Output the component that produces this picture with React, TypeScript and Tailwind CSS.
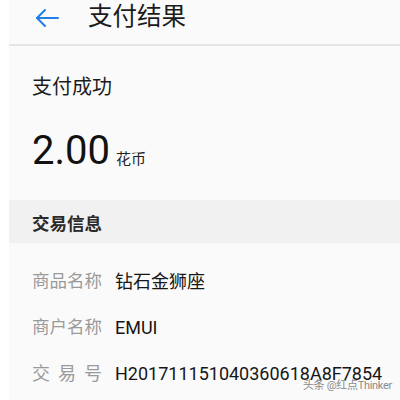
const font = { fontFamily: 'Roboto, "Noto Sans CJK SC", sans-serif' };

function BackArrow() {
  return (
    <svg width="26" height="24" viewBox="0 0 26 24" fill="none" stroke="#1f7fe6" strokeWidth="2" strokeLinecap="round" strokeLinejoin="round">
      <path d="M24 12H3" />
      <path d="M11 4L3 12L11 20" />
    </svg>
  );
}

const rows = [
  { label: '商品名称', value: '钻石金狮座', spread: false },
  { label: '商户名称', value: 'EMUI', spread: false },
  { label: '交易号', value: 'H201711151040360618A8F7854', spread: true },
];

export default function App() {
  return (
    <div className="relative h-[400px] w-[400px] overflow-hidden bg-white pl-[9px]" style={font}>
      <div className="h-full bg-[#fafafa]">
        {/* header */}
        <div className="flex h-[46px] items-start border-b-[2px] border-[#e4e4e4] pt-[3px]">
          <div className="ml-[25px] mt-[3px]">
            <BackArrow />
          </div>
          <div className="ml-[28px] text-[24.5px] leading-[28px] text-[#1c1c1c]">支付结果</div>
        </div>

        {/* result */}
        <div className="pl-[23px]">
          <div className="mt-[29px] text-[20px] leading-[24px] text-[#1c1c1c]">支付成功</div>
          <div className="mt-[32px] flex items-baseline">
            <span className="text-[40px] leading-[40px] text-[#111]">2.00</span>
            <span className="ml-[6px] text-[15px] text-[#222]">花币</span>
          </div>
        </div>

        {/* section header */}
        <div className="mt-[29px] h-[43px] bg-[#f1f1f1] pl-[23px] pt-[12px]">
          <div className="text-[17.5px] font-bold leading-[24px] text-[#2a2a2a]">交易信息</div>
        </div>

        {/* rows */}
        <div className="pt-[15px] pl-[23px]">
          {rows.map((r) => (
            <div key={r.label} className="flex h-[46px] items-center text-[18px]">
              {r.spread ? (
                <div className="flex w-[70px] justify-between text-[#9a9a9a]">
                  {r.label.split('').map((c) => (
                    <span key={c}>{c}</span>
                  ))}
                </div>
              ) : (
                <div className="w-[70px] text-[17.5px] text-[#9a9a9a]">{r.label}</div>
              )}
              <div className="ml-[13px] text-[#161616]">{r.value}</div>
            </div>
          ))}
        </div>
      </div>

      <div className="absolute right-[8px] top-[379px] whitespace-nowrap text-[11px] leading-[14px] tracking-[-0.3px] text-[#8a8a8a]">头条 @红点Thinker</div>
    </div>
  );
}
